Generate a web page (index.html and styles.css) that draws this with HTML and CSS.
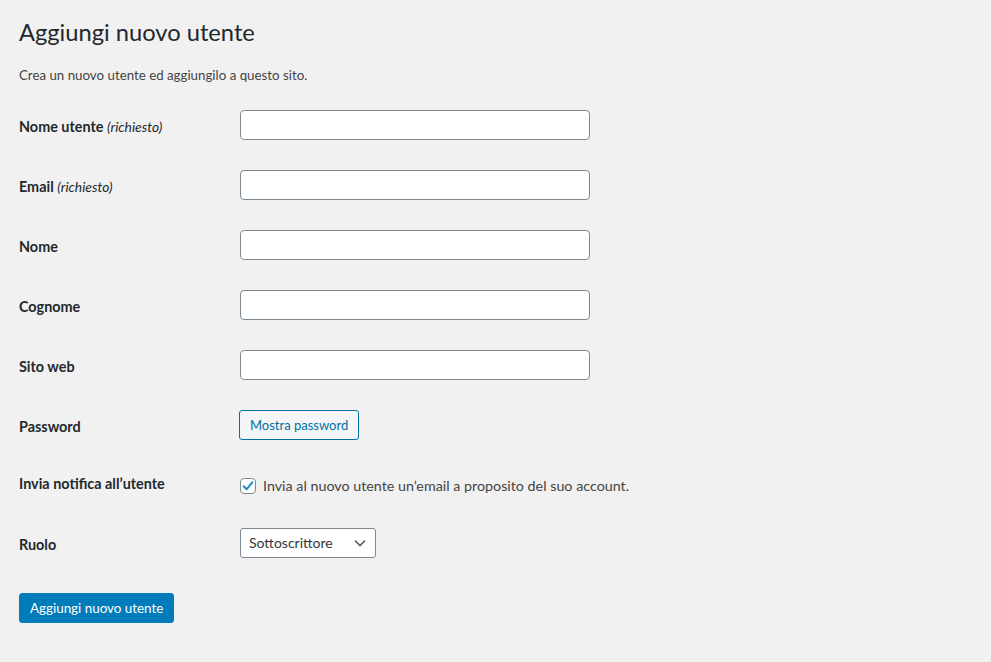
FILE: index.html
```html
<!DOCTYPE html>
<html lang="it">
<head>
<meta charset="utf-8">
<title>Aggiungi nuovo utente</title>
<link rel="stylesheet" href="styles.css">
</head>
<body>
<div class="wrap">
  <h1 class="title">Aggiungi nuovo utente</h1>
  <p class="intro">Crea un nuovo utente ed aggiungilo a questo sito.</p>
  <form class="form">
    <div class="row">
      <div class="label">Nome utente <span class="req">(richiesto)</span></div>
      <div class="field"><input class="text" type="text"></div>
    </div>
    <div class="row">
      <div class="label">Email <span class="req">(richiesto)</span></div>
      <div class="field"><input class="text" type="text"></div>
    </div>
    <div class="row">
      <div class="label">Nome</div>
      <div class="field"><input class="text" type="text"></div>
    </div>
    <div class="row">
      <div class="label">Cognome</div>
      <div class="field"><input class="text" type="text"></div>
    </div>
    <div class="row">
      <div class="label">Sito web</div>
      <div class="field"><input class="text" type="text"></div>
    </div>
    <div class="row">
      <div class="label">Password</div>
      <div class="field"><button type="button" class="btn-secondary">Mostra password</button></div>
    </div>
    <div class="row row-check">
      <div class="label">Invia notifica all’utente</div>
      <div class="field check-field">
        <span class="checkbox"><svg viewBox="0 0 16 16" width="16" height="16"><path d="M3.6 8.2 L6.6 11.3 L12.4 4.2" fill="none" stroke="#1e8cbe" stroke-width="2" stroke-linecap="round" stroke-linejoin="round"/></svg></span>
        <span class="check-text">Invia al nuovo utente un’email a proposito del suo account.</span>
      </div>
    </div>
    <div class="row">
      <div class="label">Ruolo</div>
      <div class="field">
        <div class="select"><span>Sottoscrittore</span><svg viewBox="0 0 12 8" width="12" height="8"><path d="M1 1.5 L6 6.5 L11 1.5" fill="none" stroke="#555d66" stroke-width="1.6"/></svg></div>
      </div>
    </div>
    <div class="submit">
      <button type="button" class="btn-primary">Aggiungi nuovo utente</button>
    </div>
  </form>
</div>
</body>
</html>
```
FILE: styles.css
```css
html, body {
  margin: 0;
  padding: 0;
  background: #f1f1f1;
}
body {
  font-family: Lato, "Noto Sans", sans-serif;
  font-size: 13px;
  color: #444;
  line-height: 1.4;
}
.wrap {
  padding: 0 19px;
}
.title {
  margin: 0;
  padding: 18px 0 4px;
  font-size: 23.7px;
  font-weight: 400;
  line-height: 1.26;
  color: #23282d;
}
.intro {
  margin: 14px 0 0;
  font-size: 13.3px;
  color: #444;
}
.form {
  margin-top: 11px;
}
.row {
  display: flex;
}
.label {
  width: 201px;
  padding: 23px 10px 17px 0;
  font-weight: 700;
  color: #23282d;
  font-size: 14.4px;
  line-height: 1.3;
}
.req {
  font-style: italic;
  font-weight: 400;
  font-size: 13.8px;
}
.field {
  padding: 15px 10px;
  flex: 1;
}
.text {
  display: block;
  box-sizing: border-box;
  width: 350px;
  height: 30px;
  margin: 0;
  border: 1px solid #7e8993;
  border-radius: 4px;
  background: #fff;
  padding: 0 8px;
}
.btn-secondary {
  display: block;
  box-sizing: border-box;
  height: 30px;
  margin: 0 0 0 -1px;
  padding: 0 10px;
  border: 1px solid #0071a1;
  border-radius: 3px;
  background: #f3f5f6;
  color: #0071a1;
  font-family: inherit;
  font-size: 13px;
}
.row-check .label {
  padding-top: 20px;
  padding-bottom: 16px;
}
.row-check .field {
  padding-top: 22px;
  padding-bottom: 18px;
}
.check-field {
  display: flex;
  align-items: center;
  gap: 7px;
}
.checkbox {
  box-sizing: border-box;
  width: 16px;
  height: 16px;
  border: 1px solid #7e8993;
  border-radius: 4px;
  background: #fff;
  display: flex;
}
.checkbox svg {
  margin: -1px;
}
.check-text {
  font-size: 14.3px;
  color: #444;
  line-height: 1.2;
}
.select {
  box-sizing: border-box;
  width: 136px;
  height: 30px;
  border: 1px solid #7e8993;
  border-radius: 3px;
  background: #fff;
  display: flex;
  align-items: center;
  justify-content: space-between;
  padding: 0 9px 0 8px;
  font-size: 14px;
  color: #32373c;
}
.submit {
  padding-top: 20px;
}
.btn-primary {
  box-sizing: border-box;
  height: 30px;
  padding: 0 10px;
  border: 1px solid #007cba;
  border-radius: 3px;
  background: #007cba;
  color: #fff;
  font-family: inherit;
  font-size: 13.4px;
}
```
